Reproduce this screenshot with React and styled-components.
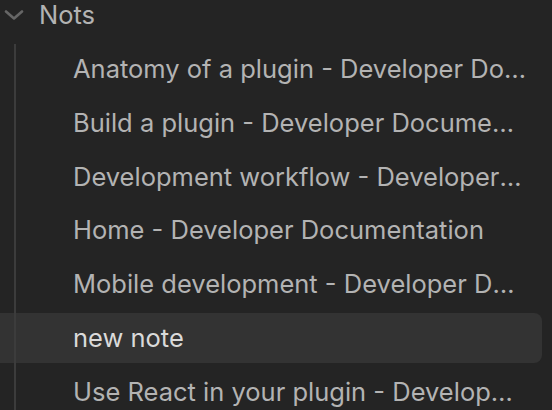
import React from "react";
import styled, { createGlobalStyle } from "styled-components";

const Global = createGlobalStyle`
  html, body { margin: 0; padding: 0; background: #242424; }
  body { width: 552px; height: 410px; overflow: hidden; }
`;

const Tree = styled.div`
  width: 552px;
  height: 410px;
  overflow: hidden;
  background: #242424;
  font-family: Inter, "Noto Sans", sans-serif;
  font-size: 25.5px;
  -webkit-font-smoothing: antialiased;
`;

const FolderTitle = styled.div`
  display: flex;
  align-items: center;
  height: 30px;
  line-height: 30px;
  padding-bottom: 14px;
  color: #b3b3b3;
`;

const Chevron = styled.svg`
  width: 20px;
  height: 10px;
  margin-left: 4px;
  margin-right: 15px;
  flex: none;
`;

const Children = styled.div`
  position: relative;
  display: flex;
  flex-direction: column;
  gap: 3.8px;
  &::before {
    content: "";
    position: absolute;
    left: 14px;
    top: 0;
    bottom: 0;
    width: 2px;
    background: #3c3c3c;
    z-index: 1;
  }
`;

const FileRow = styled.div`
  height: 50px;
  line-height: 50px;
  margin-right: 10px;
  padding: 0 16px 0 73px;
  border-radius: 0 8px 8px 0;
  background: ${(p) => (p.$active ? "#333333" : "transparent")};
  color: ${(p) => (p.$active ? "#dadada" : "#b3b3b3")};
  white-space: nowrap;
  overflow: hidden;
  text-overflow: ellipsis;
  flex: none;
`;

const files = [
  "Anatomy of a plugin - Developer Documentation",
  "Build a plugin - Developer Documentation",
  "Development workflow - Developer Documentation",
  "Home - Developer Documentation",
  "Mobile development - Developer Documentation",
  "new note",
  "Use React in your plugin - Developer Documentation",
];

export default function App() {
  return (
    <>
      <Global />
      <Tree>
        <FolderTitle>
          <Chevron viewBox="0 0 20 10" fill="none">
            <path d="M2 1.5 L10 8.5 L18 1.5" stroke="#666" strokeWidth="2.6" strokeLinecap="round" strokeLinejoin="round" />
          </Chevron>
          Nots
        </FolderTitle>
        <Children>
          {files.map((f) => (
            <FileRow key={f} $active={f === "new note"}>
              {f}
            </FileRow>
          ))}
        </Children>
      </Tree>
    </>
  );
}
